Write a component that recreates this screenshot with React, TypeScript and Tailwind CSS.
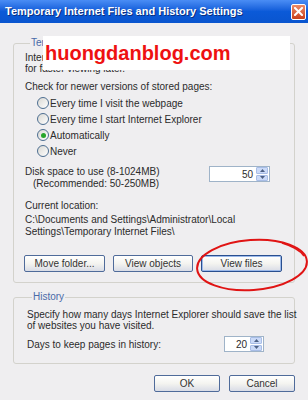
import React from 'react';

const face = 'bg-[#efeef0]';

function Radio({ label, checked }: { label: string; checked?: boolean }) {
  return (
    <div className="flex h-[16px] items-center gap-[1px]">
      <span className="flex h-[12px] w-[12px] items-center justify-center rounded-full border border-[#4d6e91] bg-gradient-to-br from-[#d9d8d3] to-white">
        {checked && <span className="h-[5px] w-[5px] rounded-full bg-[#27a52a]" />}
      </span>
      <span>{label}</span>
    </div>
  );
}

function Spinner({ value, width }: { value: string; width: string }) {
  return (
    <div className={`flex h-[16px] shrink-0 items-center border border-[#9fb3c8] bg-white pr-[1px] ${width}`}>
      <span className="flex-1 pr-[3px] text-right">{value}</span>
      <span className="flex h-[14px] w-[12px] flex-col gap-[1px]">
        <span className="flex flex-1 items-center justify-center rounded-[1px] border border-[#a8bde6] bg-[#cbdaf8]">
          <svg width="5" height="3" viewBox="0 0 5 3"><path d="M0 3L2.5 0L5 3Z" fill="#4d6185" /></svg>
        </span>
        <span className="flex flex-1 items-center justify-center rounded-[1px] border border-[#a8bde6] bg-[#cbdaf8]">
          <svg width="5" height="3" viewBox="0 0 5 3"><path d="M0 0L2.5 3L5 0Z" fill="#4d6185" /></svg>
        </span>
      </span>
    </div>
  );
}

function XpButton({ label, width, focused }: { label: string; width: string; focused?: boolean }) {
  return (
    <button
      className={`flex h-[17px] shrink-0 items-center justify-center rounded-[2px] border bg-gradient-to-b from-white via-[#f4f4f0] to-[#d9dce6] text-[#333] ${width} ${
        focused ? 'border-[#2a4f8f] shadow-[inset_0_0_0_1px_#9cb9ea]' : 'border-[#4f6b9a]'
      }`}
    >
      {label}
    </button>
  );
}

export default function App() {
  return (
    <div
      className={`relative flex h-[400px] w-[308px] flex-col overflow-hidden ${face} text-[10px] leading-[11px] text-[#2b2b2b]`}
      style={{ fontFamily: '"Liberation Sans", Arial, sans-serif' }}
    >
      <div className="flex h-[23px] shrink-0 items-center justify-between bg-gradient-to-b from-[#4a8df5] via-[#0b5ad8] to-[#0a55cf] pl-[5px] pr-[2px]">
        <span className="text-[11px] font-bold text-white [text-shadow:1px_1px_0_#0a2f80]">
          Temporary Internet Files and History Settings
        </span>
        <span className="flex h-[16px] w-[15px] items-center justify-center rounded-[2px] border border-white bg-gradient-to-b from-[#ec8a66] to-[#c9401a]">
          <svg width="9" height="9" viewBox="0 0 9 9">
            <path d="M1 1L8 8M8 1L1 8" stroke="white" strokeWidth="2" strokeLinecap="square" />
          </svg>
        </span>
      </div>

      <div className="flex flex-col px-[13px] pt-[14px]">
        <fieldset className="min-w-0 rounded-[3px] border border-[#d3d2cc] pb-[10px] pl-[11px] pr-[24px]">
          <legend className="ml-[5px] px-[1px] leading-[12px] text-[#4a6aa8]">Temporary Internet Files</legend>
          <div className="overflow-hidden whitespace-nowrap pt-[3px]">
            <div>Internet Explorer stores copies of webpages, images, and media</div>
            <div>for faster viewing later.</div>
          </div>
          <div className="mt-[7px]">Check for newer versions of stored pages:</div>
          <div className="mt-[3px] flex flex-col pl-[12px]">
            <Radio label="Every time I visit the webpage" />
            <Radio label="Every time I start Internet Explorer" />
            <Radio label="Automatically" checked />
            <Radio label="Never" />
          </div>
          <div className="mt-[7px] flex items-start justify-between">
            <div className="flex flex-col leading-[12px]">
              <span>Disk space to use (8-1024MB)</span>
              <span className="pl-[8px]">(Recommended: 50-250MB)</span>
            </div>
            <Spinner value="50" width="w-[61px]" />
          </div>
          <div className="mt-[10px]">Current location:</div>
          <div className="mt-[3px] leading-[12px]">
            C:\Documents and Settings\Administrator\Local
            <br />
            Settings\Temporary Internet Files\
          </div>
          <div className="mt-[17px] flex gap-[8px] -ml-[1px]">
            <XpButton label="Move folder..." width="w-[81px]" />
            <XpButton label="View objects" width="w-[80px]" />
            <XpButton label="View files" width="w-[81px]" focused />
          </div>
        </fieldset>

        <fieldset className="mt-[8px] min-w-0 rounded-[3px] border border-[#d3d2cc] pb-[11px] pl-[13px] pr-[30px]">
          <legend className="ml-[5px] px-[1px] leading-[12px] text-[#4a6aa8]">History</legend>
          <div className="whitespace-nowrap pt-[6px]">
            <div>Specify how many days Internet Explorer should save the list</div>
            <div>of websites you have visited.</div>
          </div>
          <div className="mt-[5px] flex items-center justify-between">
            <span>Days to keep pages in history:</span>
            <Spinner value="20" width="w-[40px]" />
          </div>
        </fieldset>

        <div className="mt-[11px] flex justify-end gap-[9px]">
          <XpButton label="OK" width="w-[66px]" />
          <XpButton label="Cancel" width="w-[66px]" />
        </div>
      </div>

      <div className="absolute left-[43px] top-[36px] flex h-[34px] w-[247px] items-center bg-white pl-[2px]">
        <span className="text-[20px] font-bold leading-none text-[#ee1111]">huongdanblog.com</span>
      </div>

      <svg className="pointer-events-none absolute inset-0" width="308" height="400" viewBox="0 0 308 400">
        <ellipse cx="252" cy="265" rx="55" ry="25" transform="rotate(-4 252 265)" fill="none" stroke="#e01414" strokeWidth="2" />
        <path d="M282 243 C 292 246, 300 250, 304 256" fill="none" stroke="#e01414" strokeWidth="1.5" />
      </svg>
    </div>
  );
}
